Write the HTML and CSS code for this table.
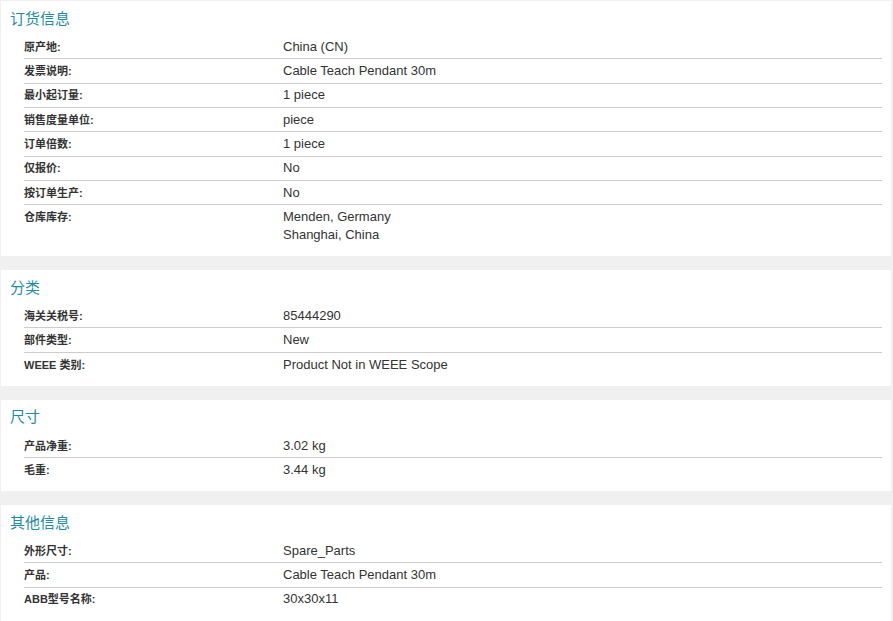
FILE: index.html
```html
<!DOCTYPE html>
<html lang="zh-CN">
<head>
<meta charset="utf-8">
<link rel="stylesheet" href="styles.css">
</head>
<body>
<div class="page">
  <section class="panel">
    <h2 class="panel-title">订货信息</h2>
    <div class="spec">
      <div class="row"><div class="label">原产地:</div><div class="value">China (CN)</div></div>
      <div class="row"><div class="label">发票说明:</div><div class="value">Cable Teach Pendant 30m</div></div>
      <div class="row"><div class="label">最小起订量:</div><div class="value">1 piece</div></div>
      <div class="row"><div class="label">销售度量单位:</div><div class="value">piece</div></div>
      <div class="row"><div class="label">订单倍数:</div><div class="value">1 piece</div></div>
      <div class="row"><div class="label">仅报价:</div><div class="value">No</div></div>
      <div class="row"><div class="label">按订单生产:</div><div class="value">No</div></div>
      <div class="row"><div class="label">仓库库存:</div><div class="value">Menden, Germany<br>Shanghai, China</div></div>
    </div>
  </section>
  <section class="panel">
    <h2 class="panel-title">分类</h2>
    <div class="spec">
      <div class="row"><div class="label">海关关税号:</div><div class="value">85444290</div></div>
      <div class="row"><div class="label">部件类型:</div><div class="value">New</div></div>
      <div class="row"><div class="label">WEEE 类别:</div><div class="value">Product Not in WEEE Scope</div></div>
    </div>
  </section>
  <section class="panel">
    <h2 class="panel-title">尺寸</h2>
    <div class="spec">
      <div class="row"><div class="label">产品净重:</div><div class="value">3.02 kg</div></div>
      <div class="row"><div class="label">毛重:</div><div class="value">3.44 kg</div></div>
    </div>
  </section>
  <section class="panel">
    <h2 class="panel-title">其他信息</h2>
    <div class="spec">
      <div class="row"><div class="label">外形尺寸:</div><div class="value">Spare_Parts</div></div>
      <div class="row"><div class="label">产品:</div><div class="value">Cable Teach Pendant 30m</div></div>
      <div class="row"><div class="label">ABB型号名称:</div><div class="value">30x30x11</div></div>
    </div>
  </section>
</div>
</body>
</html>
```

FILE: styles.css
```css
html, body {
  margin: 0;
  padding: 0;
  background: #f0f0f0;
}
body {
  font-family: "Liberation Sans", Arial, "Noto Sans CJK SC", sans-serif;
  color: #333;
}
.page {
  padding: 1px 2px 0 1px;
  display: flex;
  flex-direction: column;
  gap: 14px;
}
.panel {
  background: #fff;
  padding: 7.5px 9px 9.67px 9px;
}
.panel-title {
  margin: 0 0 6.5px 0;
  font-size: 15px;
  line-height: 20px;
  font-weight: normal;
  color: #1e8ca5;
  font-family: "Liberation Sans", "Noto Sans CJK SC", sans-serif;
}
.spec {
  margin-left: 14px;
}
.row {
  display: grid;
  grid-template-columns: 259px 1fr;
  padding: 2.8px 0 2.53px 0;
  line-height: 18px;
  border-bottom: 1px solid #cccccc;
}
.row:last-child {
  border-bottom: none;
}
.label {
  font-size: 11px;
  font-weight: bold;
  color: #333;
  font-family: "Liberation Sans", "Noto Sans CJK SC", sans-serif;
}
.value {
  font-size: 13px;
  color: #333;
}
```
